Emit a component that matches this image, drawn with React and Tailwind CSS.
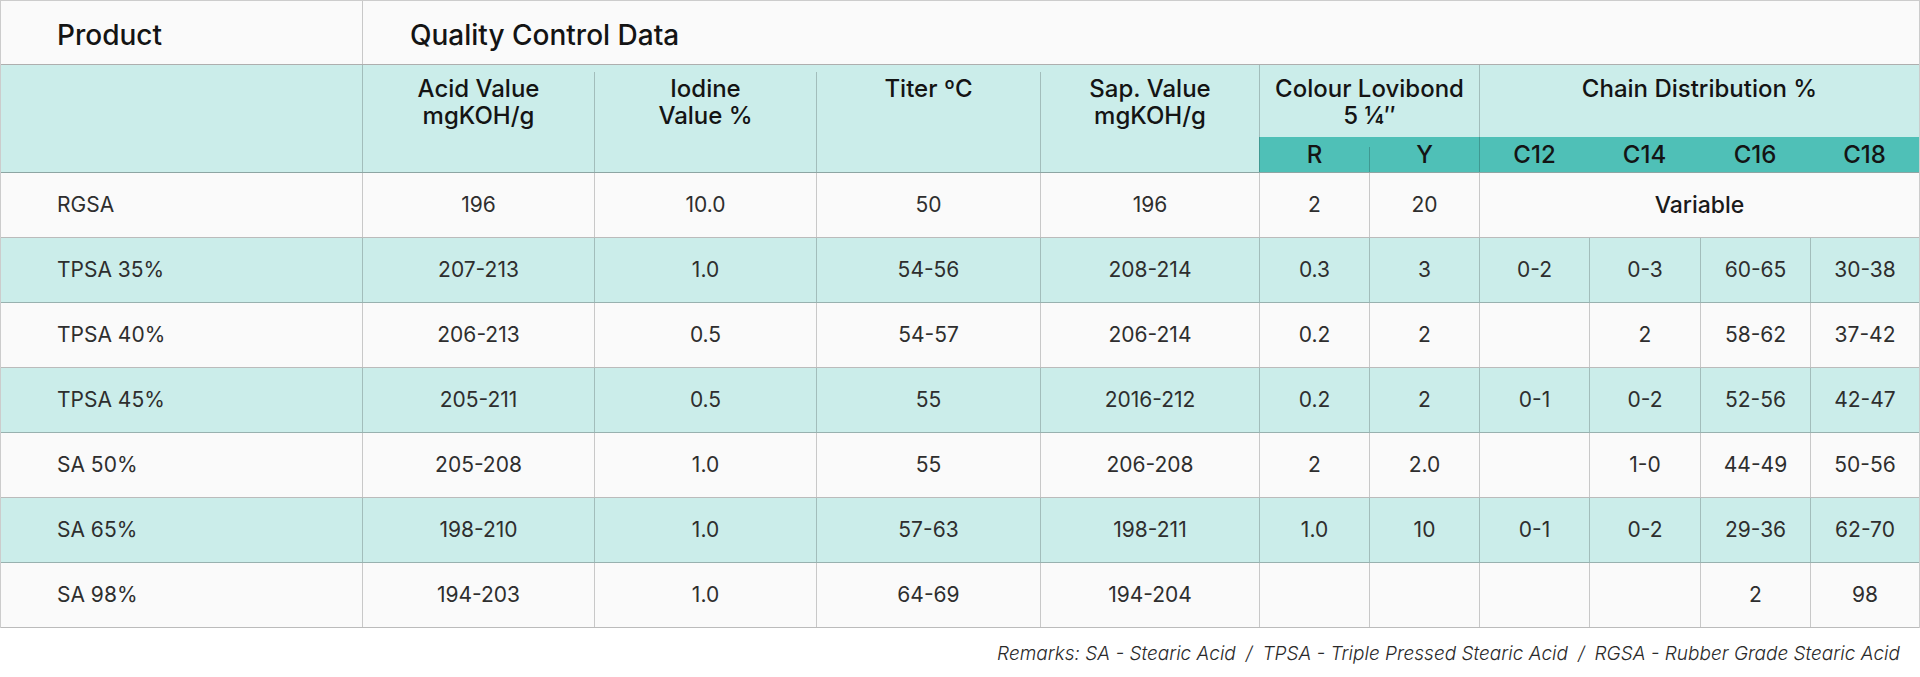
const COLS = 'grid grid-cols-[361px_232px_222px_224px_219px_110px_110px_110px_111px_110px_109px]';

const ROWS = [
  { name: 'RGSA', vals: ['196', '10.0', '50', '196', '2', '20'], variable: true },
  { name: 'TPSA 35%', vals: ['207-213', '1.0', '54-56', '208-214', '0.3', '3', '0-2', '0-3', '60-65', '30-38'] },
  { name: 'TPSA 40%', vals: ['206-213', '0.5', '54-57', '206-214', '0.2', '2', '', '2', '58-62', '37-42'] },
  { name: 'TPSA 45%', vals: ['205-211', '0.5', '55', '2016-212', '0.2', '2', '0-1', '0-2', '52-56', '42-47'] },
  { name: 'SA 50%', vals: ['205-208', '1.0', '55', '206-208', '2', '2.0', '', '1-0', '44-49', '50-56'] },
  { name: 'SA 65%', vals: ['198-210', '1.0', '57-63', '198-211', '1.0', '10', '0-1', '0-2', '29-36', '62-70'] },
  { name: 'SA 98%', vals: ['194-203', '1.0', '64-69', '194-204', '', '', '', '', '2', '98'] },
];

function DataRow({ row, i }) {
  const bg = i % 2 === 1 ? 'bg-[#cbedea]' : 'bg-[#fafafa]';
  return (
    <div className={`${COLS} h-[65px] border-b border-black/25 ${bg} text-[21px] text-[#2e2e2e]`}>
      <div className="flex items-center pl-[56px]">{row.name}</div>
      {row.vals.map((v, j) => (
        <div key={j} className="flex items-center justify-center border-l border-black/20">{v}</div>
      ))}
      {row.variable && (
        <div className="col-span-4 flex items-center justify-center border-l border-black/20 text-[23px] font-medium text-[#1a1a1a]">Variable</div>
      )}
    </div>
  );
}

export default function App() {
  return (
    <div className="w-[1920px] h-[677px] bg-white font-['Inter','Liberation_Sans',sans-serif]">
      <div className="border-t border-l border-r border-black/20">
        {/* title row */}
        <div className={`${COLS} h-[64px] border-b border-black/30 bg-[#fafafa] text-[28px] font-medium text-[#141414]`}>
          <div className="flex items-center pl-[56px] pt-[4px]">Product</div>
          <div className="col-span-10 flex items-center pl-[47px] pt-[4px] border-l border-black/20">Quality Control Data</div>
        </div>

        {/* column headers */}
        <div className={`${COLS} grid-rows-[72px_35px] border-b border-black/30 bg-[#cbedea] text-[24px] font-medium leading-[27px] text-[#141414]`}>
          <div className="col-start-1 row-start-1 row-span-2" />
          <div className="col-start-2 row-start-1 row-span-2 border-l border-black/20 pt-[10px] text-center">Acid Value<br />mgKOH/g</div>
          <div className="col-start-3 row-start-1 row-span-2 mt-[7px] border-l border-black/20 pt-[3px] text-center">Iodine<br />Value %</div>
          <div className="col-start-4 row-start-1 row-span-2 mt-[7px] border-l border-black/20 pt-[3px] text-center">Titer ºC</div>
          <div className="col-start-5 row-start-1 row-span-2 mt-[7px] border-l border-black/20 pt-[3px] text-center">Sap. Value<br />mgKOH/g</div>
          <div className="col-start-6 col-span-2 row-start-1 border-l border-black/20 pt-[10px] text-center">Colour Lovibond<br />5 ¼″</div>
          <div className="col-start-8 col-span-4 row-start-1 border-l border-black/20 pt-[10px] text-center">Chain Distribution %</div>

          <div className="col-start-6 row-start-2 flex items-center justify-center border-l border-black/20 bg-[#4fc0b7]">R</div>
          <div className="col-start-7 row-start-2 flex bg-[#4fc0b7]">
            <div className="mt-[10px] flex flex-1 items-center justify-center border-l border-black/20 pb-[10px]">Y</div>
          </div>
          <div className="col-start-8 row-start-2 flex items-center justify-center border-l border-black/20 bg-[#4fc0b7]">C12</div>
          <div className="col-start-9 row-start-2 flex items-center justify-center bg-[#4fc0b7]">C14</div>
          <div className="col-start-10 row-start-2 flex items-center justify-center bg-[#4fc0b7]">C16</div>
          <div className="col-start-11 row-start-2 flex items-center justify-center bg-[#4fc0b7]">C18</div>
        </div>

        {ROWS.map((r, i) => <DataRow key={r.name} row={r} i={i} />)}
      </div>

      <div className="mt-[14px] flex justify-end pr-[20px] text-[19px] font-light italic leading-[24px] text-[#2a2a2a]">
        <span>Remarks: SA - Stearic Acid</span>
        <span className="mx-[10px]">/</span>
        <span>TPSA - Triple Pressed Stearic Acid</span>
        <span className="mx-[10px]">/</span>
        <span>RGSA - Rubber Grade Stearic Acid</span>
      </div>
    </div>
  );
}
